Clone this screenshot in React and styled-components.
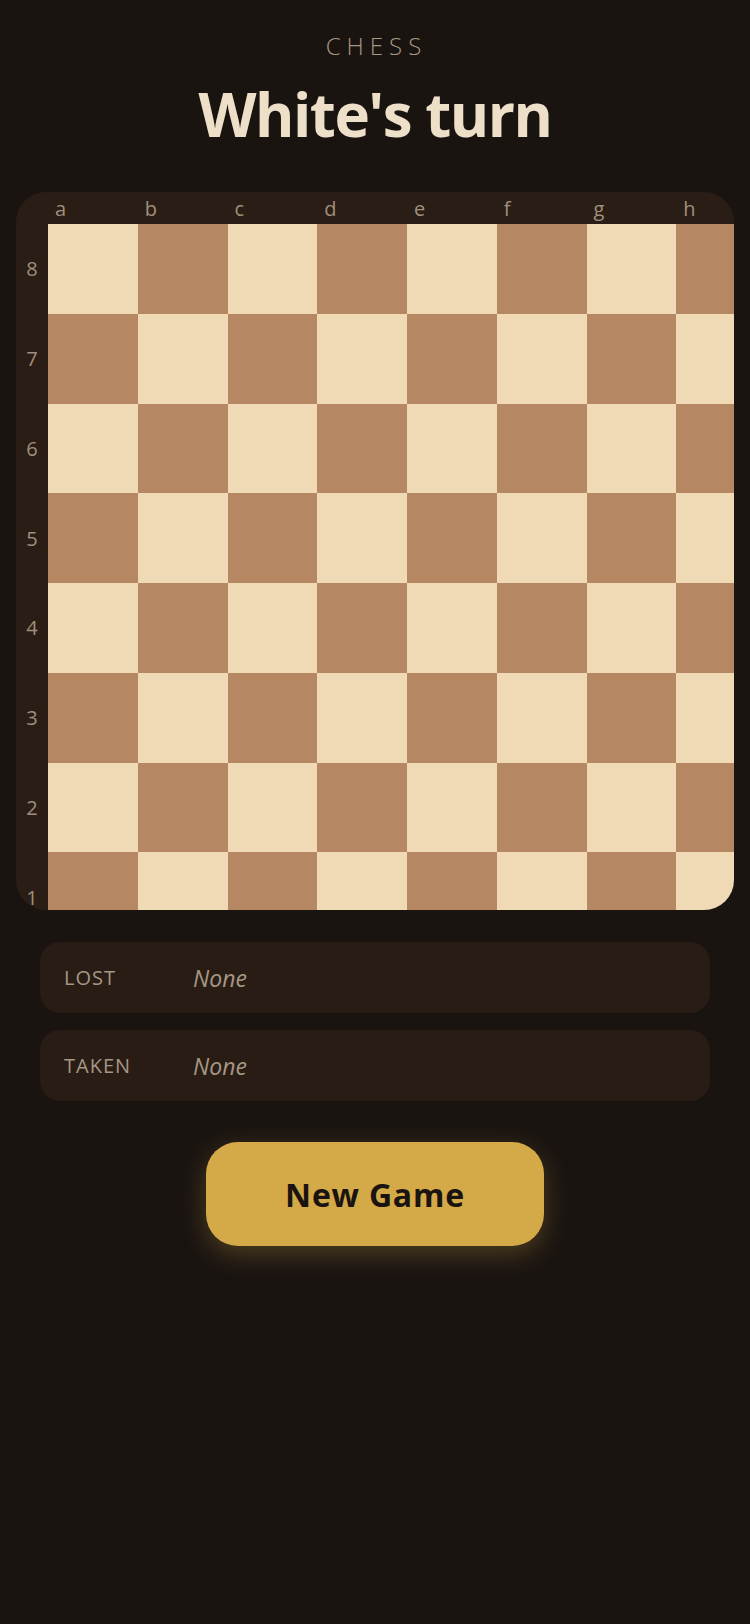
import React from 'react'
import styled, { createGlobalStyle } from 'styled-components'

const files = ['a', 'b', 'c', 'd', 'e', 'f', 'g', 'h']
const ranks = [8, 7, 6, 5, 4, 3, 2, 1]

function App() {
  return (
    <>
      <GlobalStyle />
      <Page>
        <Eyebrow>CHESS</Eyebrow>
        <Title>White's turn</Title>

        <Board>
          <Corner />
          {files.map((f) => (
            <FileLabel key={f}>{f}</FileLabel>
          ))}
          {ranks.map((r, ri) => (
            <React.Fragment key={r}>
              <RankLabel>{r}</RankLabel>
              {files.map((f, fi) => (
                <Square key={f + r} $dark={(ri + fi) % 2 === 1} />
              ))}
            </React.Fragment>
          ))}
        </Board>

        <Captures>
          <CaptureRow>
            <CaptureLabel>LOST</CaptureLabel>
            <CaptureValue>None</CaptureValue>
          </CaptureRow>
          <CaptureRow>
            <CaptureLabel>TAKEN</CaptureLabel>
            <CaptureValue>None</CaptureValue>
          </CaptureRow>
        </Captures>

        <NewGameButton>New Game</NewGameButton>
      </Page>
    </>
  )
}

export default App

const GlobalStyle = createGlobalStyle`
  html, body {
    margin:0;
    padding:0;
    background-color:#1a1411;
  }
  body {
    font-family:"Open Sans", "Noto Sans", sans-serif;
  }
`
const Page = styled.main`
  width:750px;
  min-height:1624px;
  box-sizing:border-box;
  padding-top:31px;
  display:flex;
  flex-direction:column;
  align-items:center;
  background-color:#1a1411;
`
const Eyebrow = styled.p`
  margin:0 0 21px 3px;
  font-size:24px;
  line-height:29px;
  font-weight:300;
  letter-spacing:6px;
  color:#a69783;
`
const Title = styled.h1`
  margin:0 0 45px;
  font-size:60px;
  line-height:66px;
  font-weight:700;
  letter-spacing:-1.5px;
  color:#eedfc9;
`
const Board = styled.div`
  width:718px;
  height:718px;
  overflow:hidden;
  border-radius:30px;
  background-color:#291d16;
  display:grid;
  grid-template-columns:32px repeat(8, 89.75px);
  grid-template-rows:32px repeat(8, 89.75px);
`
const Corner = styled.div``
const FileLabel = styled.div`
  padding-left:7px;
  font-size:20px;
  line-height:33px;
  color:#a08f7b;
`
const RankLabel = styled.div`
  display:flex;
  align-items:center;
  justify-content:center;
  font-size:20px;
  color:#a08f7b;
`
const Square = styled.div`
  background-color:${(p) => (p.$dark ? '#b58863' : '#f0d9b5')};
`
const Captures = styled.section`
  width:670px;
  margin-top:32px;
  display:flex;
  flex-direction:column;
  gap:17px;
`
const CaptureRow = styled.div`
  height:71px;
  box-sizing:border-box;
  padding:0 24px;
  border-radius:20px;
  background-color:#281c15;
  display:flex;
  align-items:center;
`
const CaptureLabel = styled.span`
  width:129px;
  font-size:20px;
  letter-spacing:1px;
  color:#a69783;
`
const CaptureValue = styled.span`
  font-size:23px;
  font-style:italic;
  color:#a69783;
`
const NewGameButton = styled.button`
  margin-top:41px;
  width:338px;
  height:104px;
  border:none;
  border-radius:32px;
  background-color:#d4a947;
  color:#1a1411;
  font-family:"Open Sans", "Noto Sans", sans-serif;
  font-size:32px;
  font-weight:700;
  letter-spacing:0.8px;
  box-shadow:0 8px 26px rgba(212, 169, 71, 0.28);
  cursor:pointer;
`
